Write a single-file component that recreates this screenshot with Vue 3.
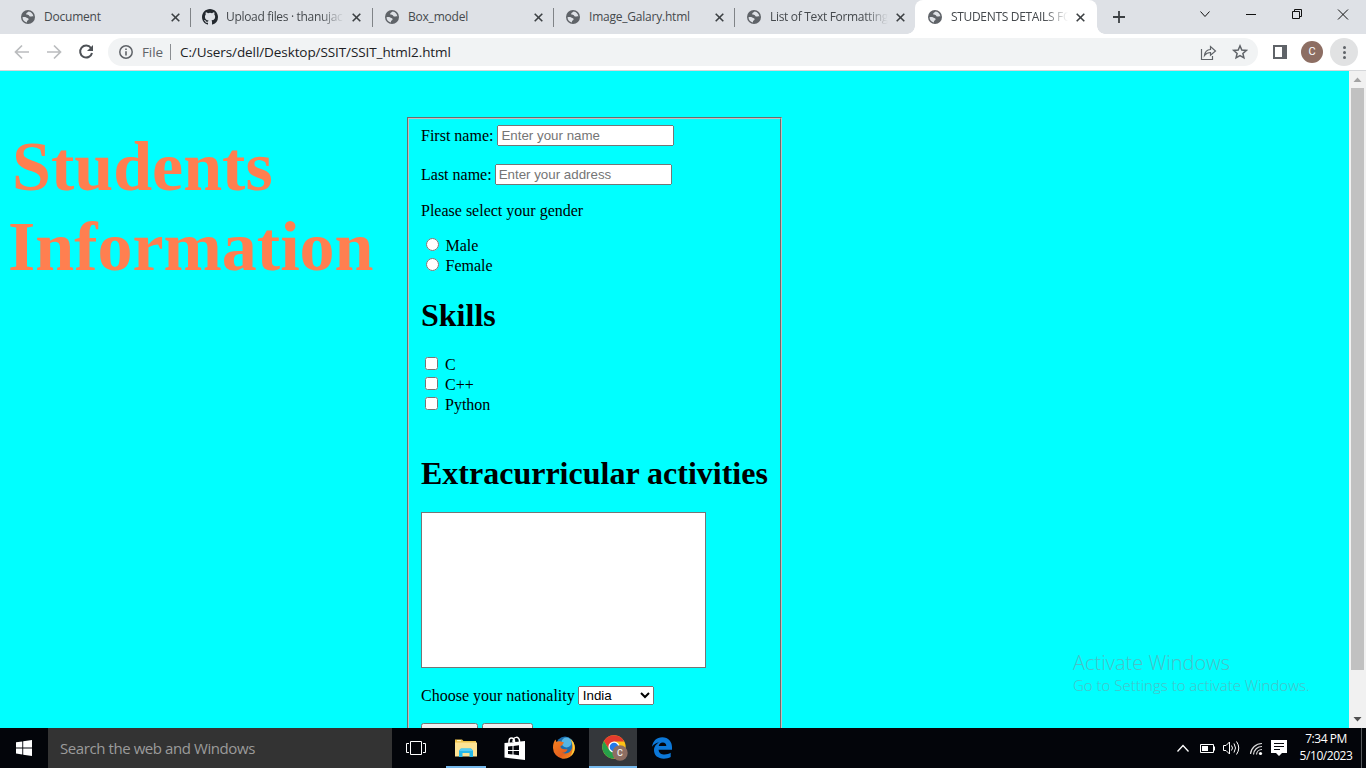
<script setup>
const tabs = [
  { title: 'Document', icon: 'globe' },
  { title: 'Upload files · thanujac', icon: 'github', fade: true },
  { title: 'Box_model', icon: 'globe' },
  { title: 'Image_Galary.html', icon: 'globe' },
  { title: 'List of Text Formatting', icon: 'globe', fade: true },
  { title: 'STUDENTS DETAILS FO', icon: 'globe', fade: true, active: true },
]
const genders = ['Male', 'Female']
const skills = ['C', 'C++', 'Python']
</script>

<template>
  <div class="screen">
    <header class="tabs">
      <div v-for="(t, i) in tabs" :key="t.title" class="tab" :class="[{ active: t.active, sep: i < 4 }, 'n' + i]">
        <svg v-if="t.icon === 'globe'" class="fav" viewBox="0 0 14 14">
          <circle cx="7" cy="7" r="7" fill="#5f6368" />
          <path d="M7.6 1.5C7 2.5 5.4 2.6 5.2 3.8C5 4.8 6.4 4.9 7.3 5C8.4 5.2 8 6.5 9.1 6.6C10.3 6.7 11 6 12.4 6.5C12.2 4 10.3 1.8 7.6 1.5ZM1.5 7.2C3.1 7.1 4.2 7 5.2 7.5C6.6 8.1 7.8 8.3 7.6 9.5C7.4 10.5 6 10.4 6 11.4L5.9 12.4C3.4 12 1.6 9.9 1.5 7.2Z" fill="#dee1e6" />
        </svg>
        <svg v-else class="fav git" viewBox="0 0 16 16">
          <path fill="#24292f" d="M8 0C3.58 0 0 3.58 0 8c0 3.54 2.29 6.53 5.47 7.59.4.07.55-.17.55-.38v-1.49c-2.01.37-2.53-.49-2.69-.94-.09-.23-.48-.94-.82-1.13-.28-.15-.68-.52-.01-.53.63-.01 1.08.58 1.23.82.72 1.21 1.87.87 2.33.66.07-.52.28-.87.51-1.07-1.78-.2-3.64-.89-3.64-3.95 0-.87.31-1.59.82-2.15-.08-.2-.36-1.02.08-2.12 0 0 .67-.21 2.2.82a7.6 7.6 0 0 1 4 0c1.53-1.04 2.2-.82 2.2-.82.44 1.1.16 1.92.08 2.12.51.56.82 1.27.82 2.15 0 3.07-1.87 3.75-3.65 3.95.29.25.54.73.54 1.48v2.2c0 .21.15.46.55.38A8 8 0 0 0 16 8c0-4.42-3.58-8-8-8Z" />
        </svg>
        <span class="title" :class="{ fade: t.fade }">{{ t.title }}</span>
        <svg class="close" viewBox="0 0 9 9"><path d="M.7.7 8.3 8.3M8.3.7.7 8.3" stroke="#3c4043" stroke-width="1.6" /></svg>
      </div>
      <svg class="plus" viewBox="0 0 12 12"><path d="M6 0V12M0 6H12" stroke="#3c4043" stroke-width="1.8" /></svg>
      <svg class="winctl" viewBox="0 0 166 34" fill="none" stroke="#111">
        <path d="M0.5 11.5 5 16.5 9.5 11.5M46 14.5H56" />
        <path d="M92.5 11.500H99.5V18.500H92.5ZM94.5 11.500V9.500H101.500V16.500H99.500" />
        <path d="M138 9.500 148 19.500M148 9.500 138 19.500" />
      </svg>
    </header>

    <nav class="toolbar">
      <svg class="navicons" viewBox="0 0 108 36" fill="none" stroke-width="1.7">
        <path d="M29 18H16M22 11.500 15.500 18 22 24.500M47 18H60M54 11.500 60.500 18 54 24.500" stroke="#babcbe" />
        <path d="M91 14A6 6 0 1 0 92 19" stroke="#4d5156" stroke-width="2" />
        <path d="M93 11V17H87Z" fill="#4d5156" />
      </svg>
      <div class="omnibox">
        <svg class="info" viewBox="0 0 14 14" fill="none" stroke="#5f6368" stroke-width="1.5"><circle cx="7" cy="7" r="6.200" /><path d="M7 6.200V10.500M7 3.500V5" stroke-width="1.600" /></svg>
        <span class="file">File</span>
        <span class="bar"></span>
        <span class="url">C:/Users/dell/Desktop/SSIT/SSIT_html2.html</span>
        <svg class="omniright" viewBox="0 0 48 20" fill="none" stroke="#5f6368">
          <path d="M1.500 7V17.500H12.500V14M4.500 13.500C5 9.500 7.500 7.600 10.500 7.500V4.500L15.500 9 10.500 13.300V10.500C8 10.500 6 11.500 4.500 13.500Z" stroke-width="1.200" />
          <path d="M40 3.800 41.800 8 46.300 8.400 42.900 11.400 43.900 15.800 40 13.500 36.100 15.800 37.100 11.400 33.700 8.400 38.200 8Z" stroke-width="1.500" />
        </svg>
      </div>
      <svg class="panel" viewBox="0 0 14 14"><path d="M0 0H14V14H0ZM2 2V12H9V2Z" fill="#5f6368" fill-rule="evenodd" /></svg>
      <span class="avatar">C</span>
      <span class="more"><i></i><i></i><i></i></span>
    </nav>

    <main class="page">
      <h1 class="heading"><span class="h-a">Students</span><span class="h-b">Information</span></h1>
      <form class="form" @submit.prevent>
        <fieldset>
          <div class="row first"><label>First name:</label><input type="text" placeholder="Enter your name" /></div>
          <div class="row last"><label>Last name:</label><input type="text" placeholder="Enter your address" /></div>
          <p class="ask">Please select your gender</p>
          <div v-for="g in genders" :key="g" class="choice"><input type="radio" name="gender" /><label>{{ g }}</label></div>
          <h1 class="skills">Skills</h1>
          <div v-for="s in skills" :key="s" class="choice"><input type="checkbox" /><label>{{ s }}</label></div>
          <h1 class="extra">Extracurricular activities</h1>
          <textarea></textarea>
          <div class="row nation"><label>Choose your nationality</label><select><option>India</option></select></div>
          <div class="buttons"><button class="b1"></button><button class="b2"></button></div>
        </fieldset>
      </form>
      <div class="scrollbar">
        <svg viewBox="0 0 17 17"><path d="M4.500 11 8.500 6.500 12.500 11Z" fill="#a3a3a3" /></svg>
        <div class="thumb"></div>
        <svg viewBox="0 0 17 17"><path d="M4.500 6 8.500 10.500 12.500 6Z" fill="#505050" /></svg>
      </div>
      <div class="watermark"><div class="w1">Activate Windows</div><div class="w2">Go to Settings to activate Windows.</div></div>
    </main>

    <footer class="taskbar">
      <div class="start"><svg viewBox="0 0 16 16" fill="#fff"><path d="M0 2.300 6.300 1.400V7.500H0ZM7.200 1.200 16 0V7.500H7.200ZM0 8.400H6.300V14.500L0 13.600ZM7.200 8.400H16V16L7.200 14.700Z" /></svg></div>
      <div class="search"><span>Search the web and Windows</span></div>
      <div class="app view">
        <svg width="20" height="14" viewBox="0 0 20 14" fill="none" stroke="#fff"><path d="M4.500.5H15.500V13.500H4.500ZM3 2.500H.5V11.500H3M17 2.500H19.500V11.500H17" /></svg>
      </div>
      <div class="app explorer">
        <svg width="22" height="20" viewBox="0 0 22 20"><path d="M0 1.500H7L8.500 3H21V18H0Z" fill="#efc34d" /><path d="M0 4.500H22V18.500H0Z" fill="#fde394" /><path d="M2 2H6V3.200H2Z" fill="#fff3bd" /><path d="M4 19V12.500L6 10.500H16L18 12.500V19H14.500V15H7.500V19Z" fill="#26b9e9" /><path d="M6 10.500H16L18 13H4Z" fill="#58cdf2" /></svg>
      </div>
      <div class="app store">
        <svg width="22" height="24" viewBox="0 0 22 24"><path d="M5 8V5C5 1 10 1 10.500 5V7M9 6C9 0 15.500 0 15.500 5V7" fill="none" stroke="#fff" stroke-width="1.500" /><path d="M.5 7 21 5V24L.5 21.500Z" fill="#fff" /><path d="M4 10.500 8.500 10V14H4ZM9.500 9.900 15 9.300V14H9.500ZM4 15H8.500V18.500L4 18ZM9.500 15H15V19.200L9.500 18.600Z" fill="#05060b" /></svg>
      </div>
      <div class="app firefox">
        <svg width="24" height="24" viewBox="0 0 24 24">
          <defs><linearGradient id="ffo" x1="0" y1="0" x2="1" y2="1"><stop offset="0" stop-color="#f58220" /><stop offset=".6" stop-color="#e5601e" /><stop offset="1" stop-color="#f9a11b" /></linearGradient></defs>
          <circle cx="13" cy="9.500" r="9" fill="#1b6fb0" /><circle cx="14.500" cy="6.500" r="5" fill="#56b6e4" />
          <path d="M20 4.500C23 8 23.600 12 22.500 15A11 11 0 0 1 1 12C.9 8 2 5.500 3.500 3.500L4.500 6C6 5 7.500 5 8.800 5.600L12 6.500 10 9.500C8 9.500 8 11.500 9.500 12.500C12 14 14 12.500 15.500 13.500C15 16 12 17 10 16.500C15 19 19 16 20 12C20.500 9 20.500 7 20 4.500Z" fill="url(#ffo)" />
          <path d="M18 2.500C24 7 24.500 15 18.500 20.500C21.500 14 21.500 8 18 2.500Z" fill="#fcd13b" />
        </svg>
      </div>
      <div class="app chrome">
        <svg width="26" height="26" viewBox="0 0 26 26">
          <circle cx="12" cy="12" r="11.700" fill="#fbc116" /><path d="M12 .3A11.700 11.700 0 0 0 1.900 6L7 14.500 12 6.500H22.200A11.700 11.700 0 0 0 12 .3Z" fill="#e33b2e" />
          <path d="M1.900 6A11.700 11.700 0 0 0 11.500 23.700L16.500 15 7 14.500Z" fill="#27a04a" /><circle cx="12" cy="12" r="5.600" fill="#fff" /><circle cx="12" cy="12" r="4.300" fill="#2479e9" />
          <circle cx="18" cy="18" r="7.700" fill="#8d6e63" /><text x="18" y="21.400" text-anchor="middle" font-family="Roboto, sans-serif" font-size="9" font-weight="500" fill="#eee">C</text>
        </svg>
      </div>
      <div class="app edge">
        <svg width="20" height="22" viewBox="0 0 20 22"><path d="M0 9.800C1 4 4.500.3 10.300.3C16.500.3 20 5 20 10V12.700H6.600C6.800 16 9.500 17.500 12.600 17.500C15 17.500 17 16.800 18.700 15.800V20C16.800 21.100 14.400 21.700 11.800 21.700C6 21.700 2 18.500 2 13.300C2 9.500 4.400 6.700 7.500 5.300C4.500 5.500 1.800 7.300 0 9.800ZM6.700 9.100H14.300C14.300 6.700 13 5.400 10.800 5.400C8.500 5.400 7.100 7 6.700 9.100Z" fill="#0c78d8" /></svg>
      </div>
      <svg class="tray" width="116" height="40" viewBox="1174 728 116 40" fill="none" stroke="#fff">
        <path d="M1177.500 751.500 1183 745.500 1188.500 751.500" stroke-width="1.300" />
        <path d="M1200.500 744.500H1213.500V752.500H1200.500Z" /><path d="M1202 746H1208V751H1202ZM1214 746.500H1215V750.500H1214Z" fill="#fff" stroke="none" />
        <path d="M1223.500 745.500H1226L1229.500 742V754L1226 750.500H1223.500ZM1231.500 745.500Q1233.500 748 1231.500 750.500M1234 743.500Q1237 748 1234 752.500M1236.500 741.500Q1241 748 1236.500 754.500" />
        <path d="M1250.500 754A11.500 11.500 0 0 1 1262 743.500M1253.500 754.500A8.500 8.500 0 0 1 1262 746.500M1256.500 754.500A5.500 5.500 0 0 1 1262 749.500" stroke-width="1.200" stroke="#ddd" /><circle cx="1260.500" cy="753.500" r="1.600" fill="#fff" stroke="none" />
        <path d="M1271 740H1287V753H1282L1279 756 1276 753H1271Z" fill="#fff" stroke="none" /><path d="M1274 743.500H1284M1274 746.500H1284M1274 749.500H1280" stroke="#05060b" />
      </svg>
      <div class="clock"><div class="time">7:34 PM</div><div class="date">5/10/2023</div></div>
      <div class="desk"></div>
    </footer>
  </div>
</template>

<style>
html, body { margin: 0; overflow: hidden; }
</style>

<style scoped>
.screen { width: 1366px; height: 768px; display: flex; flex-direction: column; overflow: hidden; font-family: "Open Sans", "Noto Sans", sans-serif; }
.screen * { box-sizing: border-box; }
svg { display: block; flex: none; }

.tabs { height: 34px; background: #dee1e6; display: flex; align-items: center; padding-left: 10px; flex: none; }
.tab { width: 181px; height: 34px; display: flex; align-items: center; padding: 0 11px; position: relative; flex: none; }
.n1 { width: 182px; padding-right: 12px; }
.n2, .n3 { padding-left: 12px; }
.n4 { width: 180px; padding: 0 10px 0 12px; }
.tab.sep::after { content: ""; position: absolute; right: 0; top: 8px; width: 1px; height: 19px; background: #808387; }
.tab.active { background: #fff; border-radius: 8px 8px 0 0; width: 182px; padding-left: 13px; padding-right: 12px; }
.tab.active::before, .tab.active::after { content: ""; position: absolute; bottom: 0; width: 8px; height: 8px; }
.tab.active::before { left: -8px; background: radial-gradient(circle at 0 0, transparent 7.5px, #fff 8px); }
.tab.active::after { right: -8px; background: radial-gradient(circle at 100% 0, transparent 7.5px, #fff 8px); }
.fav { width: 14px; height: 14px; margin-right: 9px; }
.git { width: 16px; height: 16px; margin-right: 8px; }
.title { flex: 1; font-size: 12px; letter-spacing: -0.32px; color: #45494d; white-space: nowrap; overflow: hidden; margin-right: 8px; line-height: 18px; }
.n0 .title, .n2 .title, .n3 .title { letter-spacing: -0.22px; }
.fade { -webkit-mask-image: linear-gradient(90deg, #000 calc(100% - 24px), transparent); mask-image: linear-gradient(90deg, #000 calc(100% - 24px), transparent); }
.close { width: 9px; height: 9px; }
.plus { width: 12px; height: 12px; margin-left: 16px; }
.winctl { width: 166px; height: 34px; margin-left: 75px; }

.toolbar { height: 37px; background: #fff; border-bottom: 1px solid #d5d7da; display: flex; align-items: center; flex: none; }
.navicons { width: 108px; height: 36px; }
.omnibox { width: 1150px; height: 28px; border-radius: 14px; background: #f1f3f4; display: flex; align-items: center; padding-left: 11px; }
.info { width: 14px; height: 14px; }
.file { width: 28px; margin-left: 9px; font-size: 13.500px; letter-spacing: -0.1px; color: #5f6368; }
.bar { width: 1px; height: 16px; background: #8b8e92; }
.url { margin-left: 9px; font-size: 13.500px; letter-spacing: -0.09px; color: #202124; flex: 1; white-space: nowrap; }
.omniright { width: 48px; height: 20px; margin-right: 10px; }
.panel { width: 14px; height: 14px; margin-left: 15px; }
.avatar { width: 22px; height: 22px; margin-left: 14px; border-radius: 50%; background: #8d6e63; color: #fff; font: 400 11px/22px Roboto, sans-serif; text-align: center; }
.more { width: 28px; height: 28px; margin-left: 7px; border-radius: 50%; background: #e1e2e3; display: flex; flex-direction: column; justify-content: center; align-items: center; gap: 2px; }
.more i { width: 3px; height: 3px; border-radius: 50%; background: #5f6368; }

.page { height: 657px; background: #0ff; display: flex; position: relative; overflow: hidden; font-family: "Liberation Serif", serif; font-size: 16px; color: #000; flex: none; }
.heading { width: 407px; margin: 56px 0 0; padding-left: 8px; font-size: 70px; line-height: 80px; color: #ff7f50; flex: none; }
.heading span { display: block; white-space: nowrap; }
.h-a { padding-left: 4px; }
.form { flex: 1; padding-top: 46px; }
fieldset { width: 374px; height: 640px; margin: 0; padding: 6px 12px; border: 2px groove #c0c0c0; display: flex; flex-direction: column; align-items: flex-start; }
.row { display: flex; align-items: center; gap: 4px; white-space: nowrap; }
.row input { width: 177px; height: 21px; font: 13.333px "Liberation Sans", Arial, sans-serif; padding: 1px 2px; margin: 0; }
.last { margin-top: 18px; gap: 3px; }
.ask { margin: 17px 0 0; line-height: 18px; }
.ask + .choice { margin-top: 16px; }
.choice { height: 20px; display: flex; align-items: center; line-height: 20px; }
.choice input { width: 13px; height: 13px; margin: -4px 7px 0 4px; }
.choice input[type=radio] { margin: -3px 6.500px 0 5px; }
fieldset h1 { font-size: 32px; line-height: 37px; margin: 0; white-space: nowrap; }
fieldset .skills { margin-top: 21px; margin-bottom: 21px; }
fieldset .extra { margin-top: 40px; }
textarea { width: 285px; height: 156px; margin: 20px 0 0; resize: none; border-radius: 0; flex: none; }
.nation { margin-top: 17px; height: 21px; gap: 3px; }
select { width: 76px; height: 19px; font: 13.333px "Liberation Sans", Arial, sans-serif; margin: 0; }
.buttons { display: flex; gap: 4px; margin-top: 17px; }
.buttons button { height: 21px; padding: 0; }
.b1 { width: 57px; }
.b2 { width: 51px; }
.scrollbar { width: 17px; background: #f1f1f1; display: flex; flex-direction: column; justify-content: space-between; flex: none; }
.scrollbar svg { width: 17px; height: 17px; }
.thumb { width: 13px; height: 582px; margin: 0 0 auto 2px; background: #c1c1c1; }
.watermark { position: absolute; left: 1073px; top: 578px; color: #4cc0c6; font-family: "Open Sans", sans-serif; white-space: nowrap; font-weight: 300; }
.w1 { font-size: 20px; line-height: 27px; }
.w2 { font-size: 15px; line-height: 18px; }

.taskbar { height: 40px; background: #03050a; display: flex; align-items: center; flex: none; color: #fff; }
.start { width: 48px; display: flex; justify-content: center; }
.start svg { width: 16px; height: 16px; }
.search { width: 344px; height: 40px; background: #333; color: #9b9b9b; font-size: 15px; line-height: 40px; padding-left: 12px; white-space: nowrap; letter-spacing: -0.42px; }
.app { width: 49px; height: 40px; display: flex; align-items: center; justify-content: center; position: relative; flex: none; }
.view, .chrome { width: 48px; }
.view { margin-right: 1px; }
.chrome { margin-left: 1px; }
.explorer::after, .chrome::after { content: ""; position: absolute; bottom: 0; left: 5px; width: 40px; height: 2px; background: #76b9ed; }
.chrome { background: #34373b; }
.chrome svg { margin-left: 3px; }
.chrome::after { left: 0; width: 48px; }
.tray { margin-left: auto; }
.clock { width: 71px; text-align: center; font-size: 12px; line-height: 17px; letter-spacing: -0.45px; margin-top: -2px; padding-left: 1px; }
.desk { width: 5px; height: 40px; border-left: 1px solid #55585c; }
</style>
